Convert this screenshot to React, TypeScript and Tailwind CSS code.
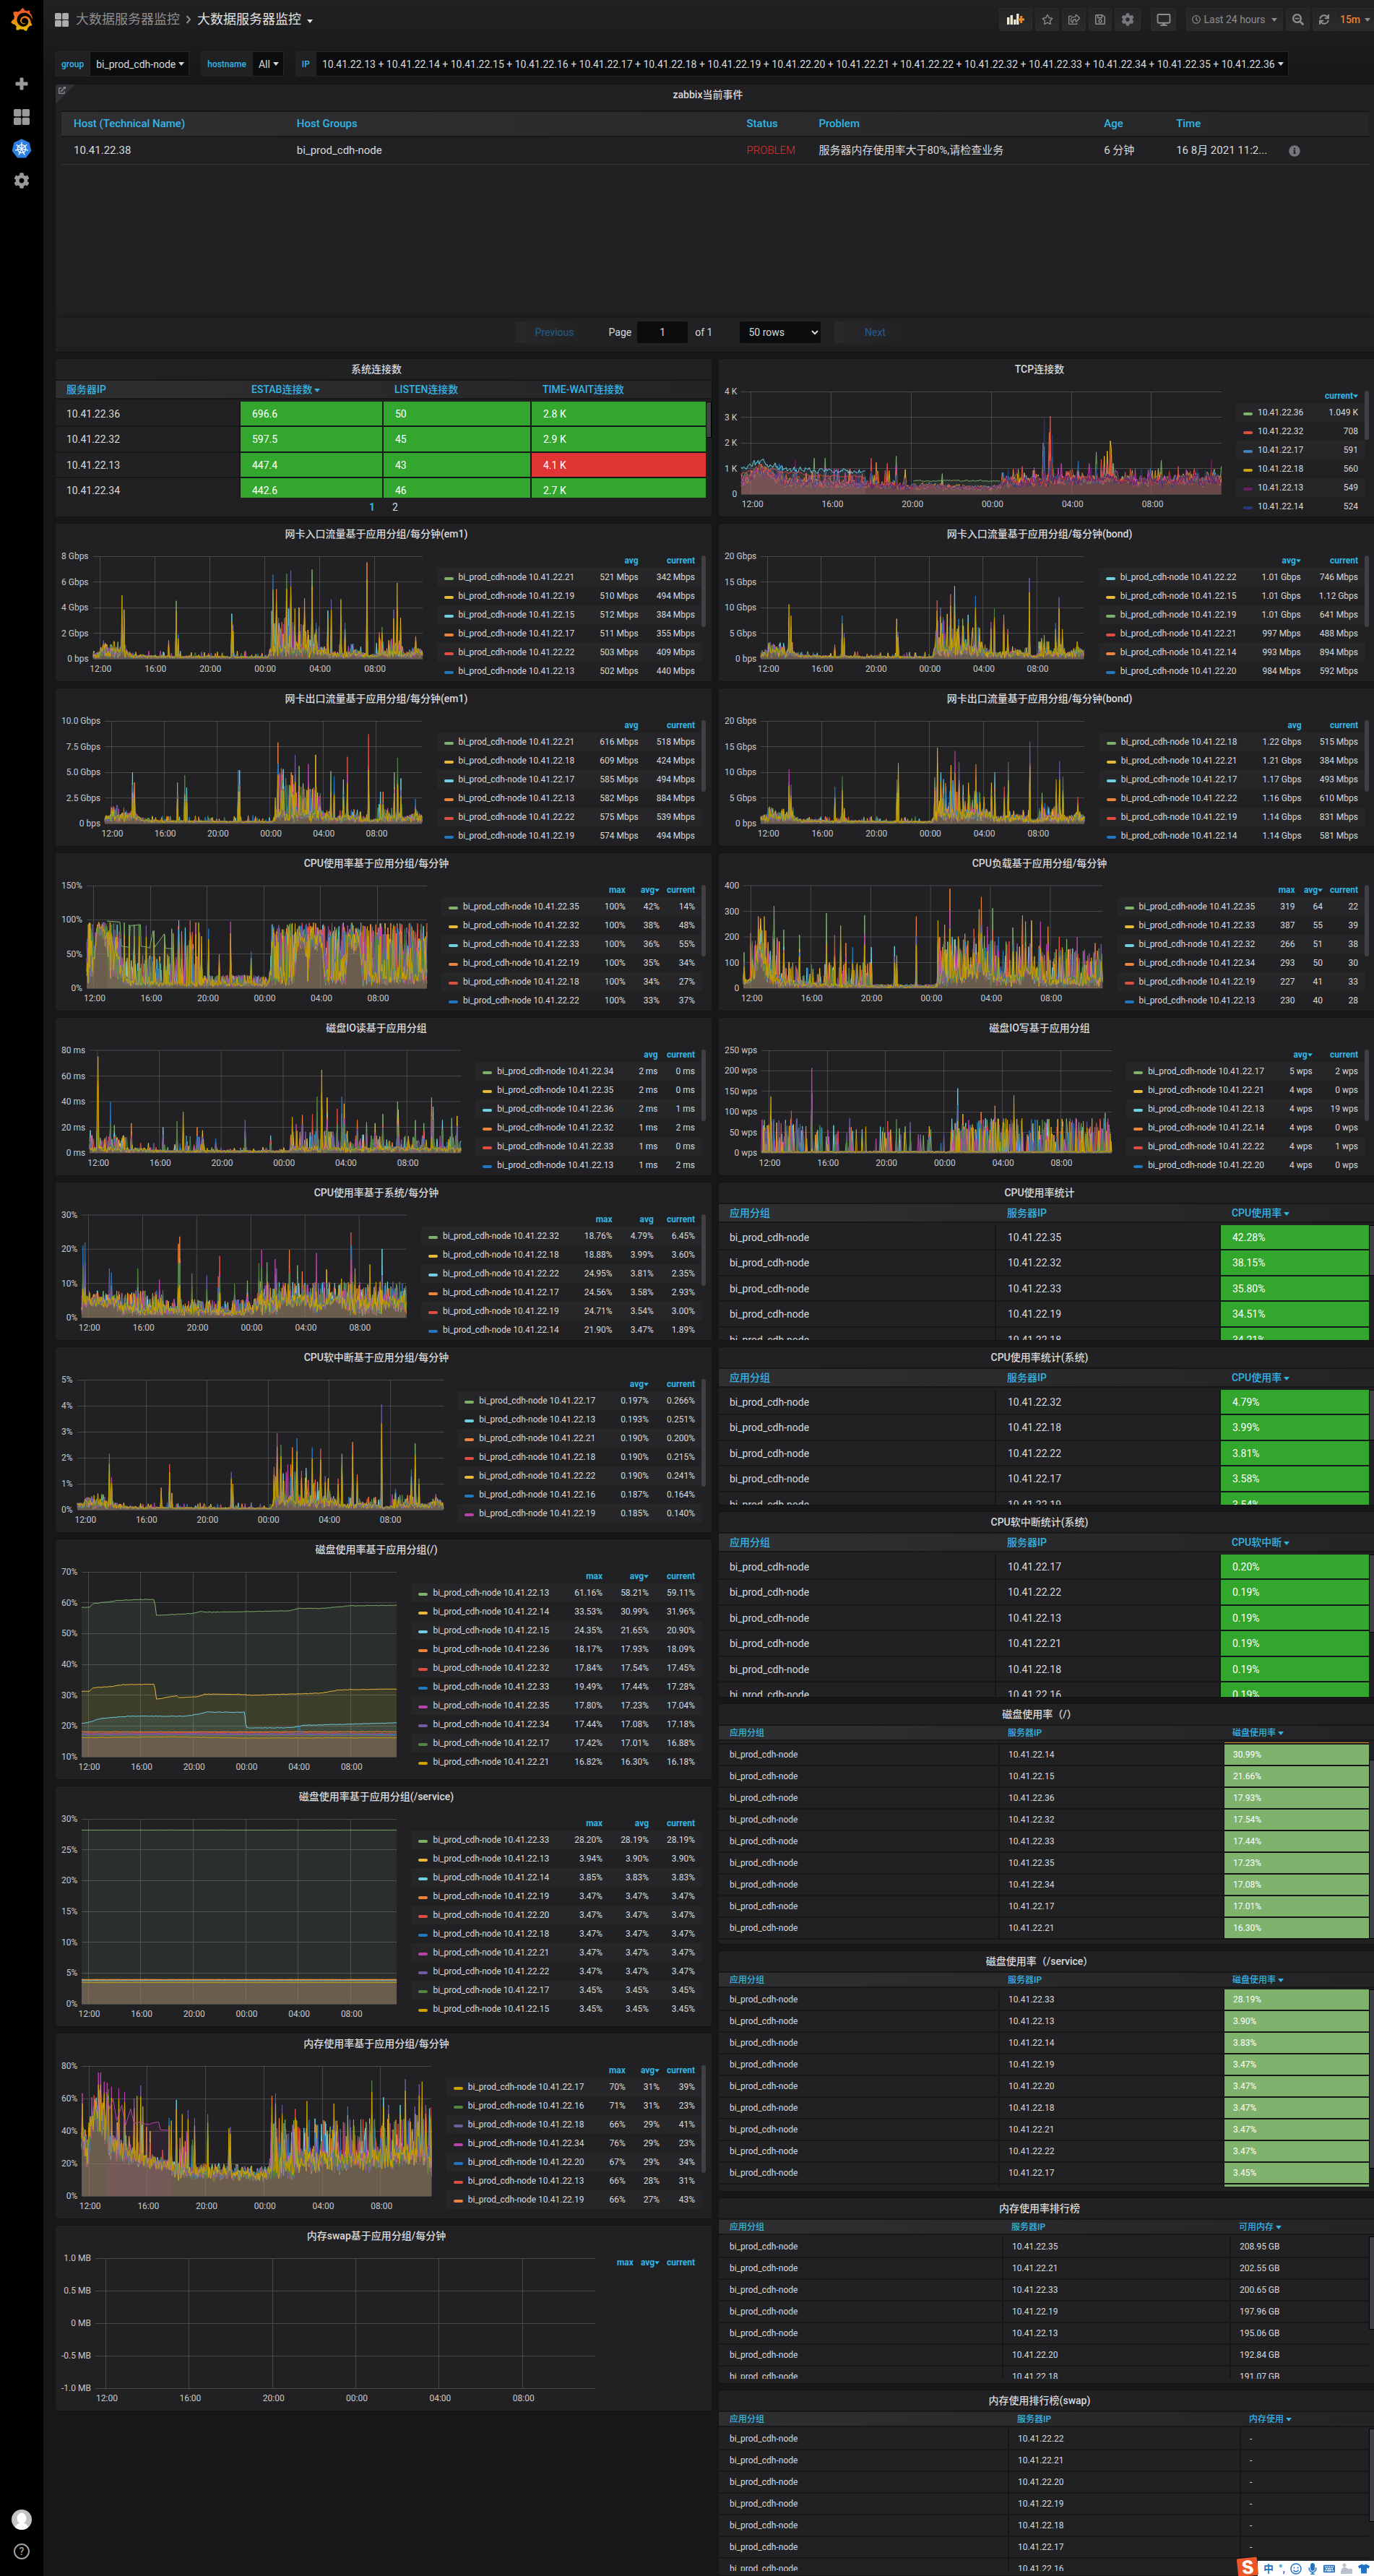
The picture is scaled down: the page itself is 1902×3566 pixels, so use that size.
import React from "react";
import {
  FaRegStar, FaCog, FaRegClock, FaSearchMinus, FaSync, FaRegSave, FaRegShareSquare,
  FaInfoCircle, FaExternalLinkAlt, FaKeyboard, FaMicrophone, FaTshirt, FaRegSmile,
} from "react-icons/fa";
import { SiGrafana } from "react-icons/si";

/* ---------- palette ---------- */
const GREEN = "#7eb26d", YELLOW = "#eab839", CYAN = "#6ed0e0", ORANGE = "#ef843c", RED = "#e24d42";
const BLUE = "#1f78c1", MAGENTA = "#ba43a9", PURPLE = "#705da0", FOREST = "#508642", GOLD = "#cca300";
const PALETTE = [GREEN, YELLOW, CYAN, ORANGE, RED, BLUE, MAGENTA, PURPLE, FOREST, GOLD];
const WINE = "#6d1f62", NAVY = "#1f3f7c", SKY = "#447ebc", RUST = "#bf4a1b";

/* ---------- series generator ---------- */
type Pt = [number, number];
type Spike = [number, number, string?];
type Burst = [number, number, number, number]; // from, to, max height, probability
type Shape = {
  seed: number;
  lo: Pt[];
  hi: Pt[];
  spikes?: Spike[];
  bursts?: Burst[];
  smooth?: number;
  follow?: number;
  colors?: string[];
};

function rng(seed: number) {
  let s = seed * 7919 + 17;
  return () => {
    s = (s + 0x6d2b79f5) | 0;
    let t = Math.imul(s ^ (s >>> 15), 1 | s);
    t = (t + Math.imul(t ^ (t >>> 7), 61 | t)) ^ t;
    return ((t ^ (t >>> 14)) >>> 0) / 4294967296;
  };
}

function level(pts: Pt[], t: number) {
  if (t <= pts[0][0]) return pts[0][1];
  for (let i = 1; i < pts.length; i++) {
    if (t <= pts[i][0]) {
      const [x0, y0] = pts[i - 1];
      const [x1, y1] = pts[i];
      return y0 + ((y1 - y0) * (t - x0)) / (x1 - x0 || 1);
    }
  }
  return pts[pts.length - 1][1];
}

const N = 480;

function build(shape: Shape) {
  const r = rng(shape.seed);
  const colors = shape.colors ?? PALETTE;
  const common = Array.from({ length: N + 1 }, () => r());
  const rows = colors.map(() => new Array<number>(N + 1).fill(0));
  const sm = shape.smooth ?? 0;
  rows.forEach((row) => {
    let prev = 0.5;
    for (let i = 0; i <= N; i++) {
      const t = i / N;
      prev = prev * sm + (r() * 0.6 + common[i] * 0.4) * (1 - sm);
      const lo = level(shape.lo, t);
      row[i] = lo + (level(shape.hi, t) - lo) * prev;
    }
  });
  const raise = (i: number, h: number, owner: number) => {
    rows.forEach((row, k) => {
      const last = k === colors.length - 1;
      const f = k === owner ? 1 : last ? (shape.follow ?? 0.82) : 0.2 + r() * 0.55;
      row[i] = Math.max(row[i], h * f);
    });
  };
  (shape.bursts ?? []).forEach(([a, b, max, p]) => {
    for (let i = Math.ceil(a * N); i <= b * N; i++) {
      rows.forEach((row) => {
        if (r() < p) row[i] = Math.max(row[i], max * (0.25 + 0.75 * r()));
      });
    }
  });
  (shape.spikes ?? []).forEach(([x, h, c]) => {
    const owner = c ? colors.indexOf(c) : Math.floor(r() * colors.length);
    raise(Math.round(x * N), h, owner < 0 ? 0 : owner);
  });
  return rows.map((row, k) => ({
    color: colors[k],
    pts: row.map((v, i) => [(i / N) * 1000, 1000 - v * 1000] as Pt),
  }));
}

type Line = { color: string; pts: Pt[] };
const wave = (color: string, pts: Pt[], jitter: number, seed: number): Line => {
  const r = rng(seed);
  return {
    color,
    pts: Array.from({ length: 241 }, (_, i) => [
      (i / 240) * 1000,
      1000 - (level(pts, i / 240) + (r() - 0.5) * jitter) * 1000,
    ] as Pt),
  };
};

/* ---------- chart ---------- */
type Chart = {
  title: string;
  y: string[];
  lines: Line[];
  heads: string[];
  rows: [string, string, ...string[]][];
  size: string;
  bar?: string;
  prefix?: string;
};

function Plot({ lines, steps }: { lines: Line[]; steps: number }) {
  return (
    <svg viewBox="0 0 1000 1000" preserveAspectRatio="none" className="block min-h-0 w-full flex-1 overflow-visible">
      <g stroke="#49494c" strokeWidth="1" shapeRendering="crispEdges">
        {Array.from({ length: steps + 1 }, (_, i) => (
          <line key={i} x1="0" x2="1000" y1={(i * 1000) / steps} y2={(i * 1000) / steps} vectorEffect="non-scaling-stroke" />
        ))}
        {Array.from({ length: 6 }, (_, i) => (
          <line key={i} y1="0" y2="1000" x1={21 + i * 166.7} x2={21 + i * 166.7} vectorEffect="non-scaling-stroke" />
        ))}
      </g>
      {lines.map((l, i) => {
        const d = l.pts.map(([x, y]) => `${x.toFixed(1)},${y.toFixed(1)}`).join(" ");
        return (
          <g key={i}>
            <polygon points={`${l.pts[0][0]},1000 ${d} ${l.pts[l.pts.length - 1][0]},1000`} fill={l.color} fillOpacity="0.1" />
            <polyline points={d} fill="none" stroke={l.color} strokeWidth="1" vectorEffect="non-scaling-stroke" />
          </g>
        );
      })}
    </svg>
  );
}

function Title({ children }: { children: React.ReactNode }) {
  return (
    <h2 className="h-7 shrink-0 truncate pr-5 text-center text-sm leading-7 font-medium text-[#d8d9da]">{children}</h2>
  );
}

const panelClass = "relative flex flex-col overflow-hidden rounded-[3px] border border-[#141414] bg-[#212124]";

function Caret({ className = "" }: { className?: string }) {
  return (
    <svg viewBox="0 0 8 5" className={"inline-block h-[5px] w-2 shrink-0 align-middle " + className} fill="currentColor">
      <path d="M0 0h8L4 5Z" />
    </svg>
  );
}

function ChartPanel({ c }: { c: Chart }) {
  return (
    <section className={panelClass + " " + c.size}>
      <Title>{c.title}</Title>
      <div className="flex min-h-0 flex-1 pl-2 text-xs">
        <div className="mt-[17px] mb-[31px] flex flex-col justify-between pr-1.5 text-right text-[#c8c9ca]">
          {c.y.map((v) => (
            <div key={v} className="flex h-0 items-center justify-end whitespace-nowrap">{v}</div>
          ))}
        </div>
        <div className="flex min-w-0 flex-1 flex-col pt-[17px]">
          <Plot lines={c.lines} steps={c.y.length - 1} />
          <div className="-ml-[6%] flex h-[31px] w-full shrink-0 pt-1.5 leading-4 text-[#c8c9ca]">
            {["12:00", "16:00", "20:00", "00:00", "04:00", "08:00"].map((t) => (
              <span key={t} className="w-1/6 text-center">{t}</span>
            ))}
          </div>
        </div>
        <div className="mr-[13px] ml-5 shrink-0 pt-[13px]">
          <table className="border-separate border-spacing-0">
            <thead>
              <tr className="h-5 text-[#33b5e5]">
                <th className="pl-2.5" />
                {c.heads.map((h) => (
                  <th key={h} className="pr-2.5 text-right font-bold whitespace-nowrap">
                    {h.replace("▾", "")}
                    {h.endsWith("▾") && <Caret className="h-1 w-[7px]" />}
                  </th>
                ))}
              </tr>
            </thead>
            <tbody>
              {c.rows.map(([color, ip, ...vals]) => (
                <tr key={ip} className="h-[26px] text-[#d8d9da] odd:bg-[#262628]">
                  <td className="pr-5 pl-2.5 whitespace-nowrap">
                    <span className="flex items-center gap-[7px]">
                      <i className="mt-1 h-1 w-[13px] rounded-xs" style={{ background: color }} />
                      {(c.prefix ?? "bi_prod_cdh-node ") + ip}
                    </span>
                  </td>
                  {vals.map((v, i) => (
                    <td key={i} className="pr-2.5 pl-[15px] text-right whitespace-nowrap">{v}</td>
                  ))}
                </tr>
              ))}
            </tbody>
          </table>
        </div>
      </div>
      {c.bar && <div className={"absolute top-11 right-2 w-1.5 rounded-full bg-[#404045] " + c.bar} />}
    </section>
  );
}

/* ---------- table panel ---------- */
type Cell = string | [string, string];
type Grid = {
  title: string;
  size: string;
  cols: number[];
  heads: string[];
  rows: Cell[][];
  small?: boolean;
  bodyClass: string;
  bar: string;
  pager?: boolean;
  cut?: boolean;
};

function TablePanel({ g }: { g: Grid }) {
  const total = g.cols.reduce((a, b) => a + b, 0);
  return (
    <section className={panelClass + " " + g.size}>
      <Title>{g.title}</Title>
      <div className="relative border-t-2 border-[#161719]">
        <div className={"absolute inset-x-0 top-0 border-b-2 border-[#161719] bg-linear-to-r from-[#2f2f32] to-[#242426] " + (g.small ? "h-[21px]" : "h-[26px]")} />
        <div className={"relative overflow-hidden pr-2 " + g.bodyClass}>
          <table className={"w-full table-fixed border-separate border-spacing-0 text-left " + (g.small ? "text-xs" : "text-sm")}>
            <colgroup>
              {g.cols.map((c, i) => (
                <col key={i} style={{ width: `${(c / total) * 100}%` }} />
              ))}
            </colgroup>
            <thead>
              <tr className={g.small ? "h-[23px]" : "h-[29px]"}>
                {g.heads.map((h, i) => (
                  <th key={h} className={"align-top font-medium whitespace-nowrap text-[#33b5e5] " + (g.small ? "leading-5 " : "leading-6 ") + (i ? (g.small ? "pl-[11px]" : "pl-[15px]") : "pl-[15px]")}>
                    {h.replace("▾", "")}
                    {h.endsWith("▾") && <Caret className="ml-[3px]" />}
                  </th>
                ))}
              </tr>
            </thead>
            <tbody>
              {g.cut && (
                <tr className="h-[3px]">
                  {g.cols.map((_, i) => (
                    <td key={i} className={"border-r-2 border-b-2 border-[#161719] p-0 leading-none last:border-r-0 " + (i === 2 ? "bg-[#e0892f]" : "")} />
                  ))}
                </tr>
              )}
              {g.rows.map((row, ri) => (
                <tr key={ri} className={g.small ? "h-[30px]" : "odd:h-[35px] even:h-[36px]"}>
                  {row.map((cell, i) => {
                    const [text, bg] = typeof cell === "string" ? [cell, ""] : cell;
                    return (
                      <td
                        key={i}
                        className={"border-r-2 border-b-2 border-[#161719] py-0 leading-5 whitespace-nowrap last:border-r-0 " + (i ? (g.small ? "pl-3 " : "pl-4 ") : "pl-[15px] ") + (bg ? bg + " text-white" : "text-[#d8d9da]")}
                      >
                        {text}
                      </td>
                    );
                  })}
                </tr>
              ))}
            </tbody>
          </table>
        </div>
        <div className={"absolute right-0 w-2 border border-black bg-[#404045] " + g.bar} />
      </div>
      {g.pager && (
        <nav className="mt-[3px] flex justify-center gap-6 text-sm leading-5">
          <a href="#1" className="font-bold text-[#33b5e5]">1</a>
          <a href="#2" className="text-[#d8d9da]">2</a>
        </nav>
      )}
    </section>
  );
}

/* ---------- data ---------- */
const S = "h-[220px]", M = "h-[258px]", L = "h-[334px]";
const netLo: Pt[] = [[0, 0.005], [1, 0.005]];
const netHi: Pt[] = [[0, 0.08], [0.02, 0.1], [0.025, 0.18], [0.05, 0.13], [0.09, 0.12], [0.12, 0.05], [0.2, 0.035], [0.53, 0.025], [0.54, 0.18], [0.7, 0.15], [0.72, 0.07], [0.8, 0.1], [0.84, 0.04], [0.9, 0.1], [0.95, 0.07], [0.98, 0.14], [1, 0.09]];
const netBursts = (k: number): Burst[] => [[0.54, 0.6, 0.5 * k, 0.1], [0.6, 0.69, 0.36 * k, 0.07], [0.74, 0.83, 0.15 * k, 0.05], [0.86, 0.94, 0.2 * k, 0.08], [0.02, 0.1, 0.18 * k, 0.08], [0.1, 0.53, 0.08 * k, 0.03]];
const mix = (heights: number[], tips: string[]): Spike[] => {
  const xs = [0.087, 0.093, 0.23, 0.253, 0.258, 0.42, 0.425, 0.538, 0.546, 0.556, 0.563, 0.588, 0.599, 0.613, 0.625, 0.642, 0.665, 0.677, 0.713, 0.722, 0.753, 0.765, 0.831, 0.868, 0.877, 0.912, 0.923, 0.933, 0.979];
  return xs.map((x, i) => [x, heights[i], tips[i % tips.length]] as Spike);
};

const conn = (ip: string, a: string, b: string, c: string, red = false): Cell[] => [
  ip, [a, "bg-[#32a62d]"], [b, "bg-[#32a62d]"], [c, red ? "bg-[#e13535]" : "bg-[#32a62d]"],
];
const node = (ip: string, v: string, bg = ""): Cell[] => ["bi_prod_cdh-node", "10.41.22." + ip, bg ? [v, bg] : v];
const G1 = "bg-[#32a62d]", G2 = "bg-[#7eb26d]";

const left: (Chart | Grid)[] = [
  {
    title: "系统连接数", size: S, cols: [256, 198, 205, 241], bodyClass: "h-[162px]", bar: "top-[29px] h-[50px]", pager: true,
    heads: ["服务器IP", "ESTAB连接数▾", "LISTEN连接数", "TIME-WAIT连接数"],
    rows: [conn("10.41.22.36", "696.6", "50", "2.8 K"), conn("10.41.22.32", "597.5", "45", "2.9 K"), conn("10.41.22.13", "447.4", "43", "4.1 K", true), conn("10.41.22.34", "442.6", "46", "2.7 K")],
  },
  {
    title: "网卡入口流量基于应用分组/每分钟(em1)", size: S, bar: "h-[99px]", y: ["8 Gbps", "6 Gbps", "4 Gbps", "2 Gbps", "0 bps"],
    heads: ["avg", "current"],
    rows: [[GREEN, "10.41.22.21", "521 Mbps", "342 Mbps"], [YELLOW, "10.41.22.19", "510 Mbps", "494 Mbps"], [CYAN, "10.41.22.15", "512 Mbps", "384 Mbps"], [ORANGE, "10.41.22.17", "511 Mbps", "355 Mbps"], [RED, "10.41.22.22", "503 Mbps", "409 Mbps"], [BLUE, "10.41.22.13", "502 Mbps", "440 Mbps"]],
    lines: build({ seed: 1, lo: netLo, hi: netHi, bursts: netBursts(1), spikes: mix([0.62, 0.48, 0.18, 0.565, 0.24, 0.44, 0.33, 0.1, 0.82, 0.68, 0.4, 0.83, 0.86, 0.49, 0.5, 0.59, 0.87, 0.35, 0.47, 0.58, 0.58, 0.35, 0.94, 0.26, 0.31, 0.48, 0.74, 0.4, 0.22], [GOLD, YELLOW, ORANGE, GREEN, BLUE, CYAN, PURPLE, GOLD, BLUE, ORANGE, RED, FOREST, PURPLE]) }),
  },
  {
    title: "网卡出口流量基于应用分组/每分钟(em1)", size: S, bar: "h-[99px]", y: ["10.0 Gbps", "7.5 Gbps", "5.0 Gbps", "2.5 Gbps", "0 bps"],
    heads: ["avg", "current"],
    rows: [[GREEN, "10.41.22.21", "616 Mbps", "518 Mbps"], [YELLOW, "10.41.22.18", "609 Mbps", "424 Mbps"], [CYAN, "10.41.22.17", "585 Mbps", "494 Mbps"], [ORANGE, "10.41.22.13", "582 Mbps", "884 Mbps"], [RED, "10.41.22.22", "575 Mbps", "539 Mbps"], [BLUE, "10.41.22.19", "574 Mbps", "494 Mbps"]],
    lines: build({ seed: 2, lo: netLo, hi: netHi, bursts: netBursts(1), follow: 0.6, spikes: mix([0.5, 0.4, 0.4, 0.47, 0.35, 0.52, 0.52, 0.25, 0.79, 0.54, 0.53, 0.5, 0.67, 0.56, 0.39, 0.58, 0.67, 0.27, 0.51, 0.46, 0.43, 0.65, 0.87, 0.31, 0.31, 0.5, 0.64, 0.44, 0.24], [CYAN, ORANGE, GREEN, FOREST, CYAN, BLUE, CYAN, GOLD, ORANGE, RED, CYAN, ORANGE, PURPLE, GREEN, YELLOW, MAGENTA, YELLOW, RED, GREEN, BLUE, CYAN, RED, RED]) }),
  },
  {
    title: "CPU使用率基于应用分组/每分钟", size: S, bar: "h-[99px]", y: ["150%", "100%", "50%", "0%"],
    heads: ["max", "avg▾", "current"],
    rows: [[GREEN, "10.41.22.35", "100%", "42%", "14%"], [YELLOW, "10.41.22.32", "100%", "38%", "48%"], [CYAN, "10.41.22.33", "100%", "36%", "55%"], [ORANGE, "10.41.22.19", "100%", "35%", "34%"], [RED, "10.41.22.18", "100%", "34%", "27%"], [BLUE, "10.41.22.22", "100%", "33%", "37%"]],
    lines: build({
      seed: 3,
      lo: [[0, 0.02], [0.02, 0.05], [0.03, 0.5], [0.05, 0.45], [0.07, 0.05], [0.1, 0.01], [0.61, 0.01], [0.62, 0.32], [0.64, 0.35], [0.65, 0.02], [0.66, 0.35], [0.69, 0.35], [0.7, 0.01], [0.76, 0.01], [0.77, 0.35], [0.8, 0.3], [0.81, 0.01], [1, 0.01]],
      hi: [[0, 0.3], [0.02, 0.35], [0.03, 0.66], [0.07, 0.66], [0.1, 0.3], [0.12, 0.12], [0.2, 0.08], [0.3, 0.07], [0.53, 0.05], [0.54, 0.2], [0.61, 0.2], [0.62, 0.6], [0.69, 0.6], [0.7, 0.2], [0.76, 0.2], [0.77, 0.6], [0.8, 0.6], [0.82, 0.2], [1, 0.25]],
      bursts: [[0, 0.1, 0.65, 0.35], [0.1, 0.34, 0.33, 0.12], [0.25, 0.34, 0.62, 0.07], [0.34, 0.53, 0.13, 0.35], [0.54, 1, 0.64, 0.36]],
      spikes: [[0.11, 0.64, GREEN], [0.125, 0.62, GREEN], [0.14, 0.62, GREEN], [0.155, 0.62, GREEN], [0.175, 0.61, PURPLE], [0.197, 0.56, GREEN], [0.23, 0.52, GREEN], [0.27, 0.66, CYAN], [0.305, 0.66, RED], [0.32, 0.64, ORANGE], [0.33, 0.64, GOLD], [0.358, 0.58, BLUE], [0.422, 0.65, MAGENTA], [0.483, 0.36, BLUE], [0.39, 0.33, ORANGE]],
    }).concat([{ color: GREEN, pts: [[60, 345], [98, 355], [102, 590], [125, 600], [128, 390], [158, 380], [160, 590], [180, 600], [185, 610], [195, 440], [200, 600], [228, 470], [232, 610], [252, 615]] }]),
  },
  {
    title: "磁盘IO读基于应用分组", size: S, bar: "h-[99px]", y: ["80 ms", "60 ms", "40 ms", "20 ms", "0 ms"],
    heads: ["avg", "current"],
    rows: [[GREEN, "10.41.22.34", "2 ms", "0 ms"], [YELLOW, "10.41.22.35", "2 ms", "0 ms"], [CYAN, "10.41.22.36", "2 ms", "1 ms"], [ORANGE, "10.41.22.32", "1 ms", "2 ms"], [RED, "10.41.22.33", "1 ms", "0 ms"], [BLUE, "10.41.22.13", "1 ms", "2 ms"]],
    lines: build({
      seed: 4, follow: 0.12, lo: [[0, 0], [1, 0]],
      hi: [[0, 0.07], [0.13, 0.06], [0.2, 0.03], [0.53, 0.03], [0.55, 0.07], [1, 0.07]],
      bursts: [[0, 0.1, 0.18, 0.08], [0.1, 0.25, 0.1, 0.04], [0.25, 0.31, 0.18, 0.1], [0.31, 0.53, 0.06, 0.04], [0.54, 0.7, 0.22, 0.09], [0.7, 1, 0.18, 0.07]],
      spikes: [[0.021, 0.6, GOLD], [0.023, 0.94, GOLD], [0.003, 0.22, CYAN], [0.056, 0.5, BLUE], [0.067, 0.27, GREEN], [0.113, 0.29, ORANGE], [0.197, 0.25, CYAN], [0.235, 0.31, FOREST], [0.252, 0.4, GOLD], [0.29, 0.25, ORANGE], [0.305, 0.22, YELLOW], [0.34, 0.14, BLUE], [0.419, 0.32, PURPLE], [0.487, 0.17, CYAN], [0.545, 0.35, GOLD], [0.556, 0.28, MAGENTA], [0.573, 0.37, ORANGE], [0.6, 0.38, RED], [0.613, 0.55, FOREST], [0.625, 0.81, GOLD], [0.64, 0.54, YELLOW], [0.666, 0.43, RED], [0.68, 0.55, BLUE], [0.686, 0.48, YELLOW], [0.72, 0.32, ORANGE], [0.745, 0.3, GREEN], [0.768, 0.29, YELLOW], [0.789, 0.38, GREEN], [0.829, 0.5, GREEN], [0.831, 0.42, YELLOW], [0.877, 0.32, GREEN], [0.9, 0.29, GREEN], [0.92, 0.54, ORANGE], [0.925, 0.45, CYAN], [0.95, 0.32, CYAN], [0.975, 0.34, GREEN], [0.99, 0.36, YELLOW]],
    }),
  },
  {
    title: "CPU使用率基于系统/每分钟", size: S, bar: "h-[99px]", y: ["30%", "20%", "10%", "0%"],
    heads: ["max", "avg", "current"],
    rows: [[GREEN, "10.41.22.32", "18.76%", "4.79%", "6.45%"], [YELLOW, "10.41.22.18", "18.88%", "3.99%", "3.60%"], [CYAN, "10.41.22.22", "24.95%", "3.81%", "2.35%"], [ORANGE, "10.41.22.17", "24.56%", "3.58%", "2.93%"], [RED, "10.41.22.19", "24.71%", "3.54%", "3.00%"], [BLUE, "10.41.22.14", "21.90%", "3.47%", "1.89%"]],
    lines: build({
      seed: 5, follow: 0.4,
      lo: [[0, 0.02], [0.02, 0.1], [0.1, 0.08], [0.12, 0.01], [0.53, 0.01], [0.6, 0.01], [0.62, 0.1], [0.7, 0.08], [0.72, 0.01], [0.78, 0.15], [0.82, 0.01], [0.92, 0.01], [0.95, 0.1], [0.98, 0.02], [1, 0.02]],
      hi: [[0, 0.22], [0.1, 0.22], [0.15, 0.14], [0.3, 0.12], [0.5, 0.08], [0.54, 0.22], [0.7, 0.26], [0.74, 0.15], [0.8, 0.28], [0.9, 0.2], [1, 0.22]],
      bursts: [[0, 0.25, 0.27, 0.2], [0.25, 0.52, 0.18, 0.16], [0.54, 1, 0.35, 0.2]],
      spikes: [[0.005, 0.7, BLUE], [0.01, 0.73, BLUE], [0.086, 0.48, PURPLE], [0.092, 0.44, BLUE], [0.172, 0.48, FOREST], [0.24, 0.37, MAGENTA], [0.298, 0.72, ORANGE], [0.302, 0.79, ORANGE], [0.34, 0.43, FOREST], [0.385, 0.41, PURPLE], [0.42, 0.4, RED], [0.424, 0.6, RED], [0.47, 0.33, FOREST], [0.51, 0.36, GREEN], [0.545, 0.53, FOREST], [0.555, 0.66, MAGENTA], [0.57, 0.54, GREEN], [0.595, 0.57, MAGENTA], [0.6, 0.48, PURPLE], [0.64, 0.66, ORANGE], [0.665, 0.51, GREEN], [0.68, 0.45, ORANGE], [0.722, 0.63, MAGENTA], [0.755, 0.47, YELLOW], [0.8, 0.38, GOLD], [0.83, 0.83, RED], [0.832, 0.7, BLUE], [0.842, 0.48, GOLD], [0.888, 0.52, GOLD], [0.925, 0.67, CYAN], [0.97, 0.32, PURPLE], [0.998, 0.31, FOREST]],
    }),
  },
  {
    title: "CPU软中断基于应用分组/每分钟", size: M, bar: "h-[149px]", y: ["5%", "4%", "3%", "2%", "1%", "0%"],
    heads: ["avg▾", "current"],
    rows: [[GREEN, "10.41.22.17", "0.197%", "0.266%"], [CYAN, "10.41.22.13", "0.193%", "0.251%"], [ORANGE, "10.41.22.21", "0.190%", "0.200%"], [RED, "10.41.22.18", "0.190%", "0.215%"], [YELLOW, "10.41.22.22", "0.190%", "0.241%"], [BLUE, "10.41.22.16", "0.187%", "0.164%"], [MAGENTA, "10.41.22.19", "0.185%", "0.140%"]],
    lines: build({ seed: 6, lo: netLo, hi: netHi.map(([x, y]) => [x, y * 0.7] as Pt), bursts: netBursts(0.7), spikes: mix([0.43, 0.25, 0.17, 0.35, 0.13, 0.29, 0.2, 0.33, 0.59, 0.5, 0.28, 0.48, 0.55, 0.3, 0.32, 0.48, 0.47, 0.26, 0.24, 0.43, 0.52, 0.27, 0.81, 0.16, 0.1, 0.31, 0.51, 0.24, 0.12], [FOREST, MAGENTA, ORANGE, RED, YELLOW, PURPLE, GOLD, RED, MAGENTA, FOREST, CYAN, ORANGE, BLUE, RED, CYAN, BLUE, RED, PURPLE, RED, GREEN, ORANGE, ORANGE, PURPLE, BLUE, GREEN, BLUE, GREEN]) }),
  },
  {
    title: "磁盘使用率基于应用分组(/)", size: L, y: ["70%", "60%", "50%", "40%", "30%", "20%", "10%"],
    heads: ["max", "avg▾", "current"],
    rows: [[GREEN, "10.41.22.13", "61.16%", "58.21%", "59.11%"], [YELLOW, "10.41.22.14", "33.53%", "30.99%", "31.96%"], [CYAN, "10.41.22.15", "24.35%", "21.65%", "20.90%"], [ORANGE, "10.41.22.36", "18.17%", "17.93%", "18.09%"], [RED, "10.41.22.32", "17.84%", "17.54%", "17.45%"], [BLUE, "10.41.22.33", "19.49%", "17.44%", "17.28%"], [MAGENTA, "10.41.22.35", "17.80%", "17.23%", "17.04%"], [PURPLE, "10.41.22.34", "17.44%", "17.08%", "17.18%"], [FOREST, "10.41.22.17", "17.42%", "17.01%", "16.88%"], [GOLD, "10.41.22.21", "16.82%", "16.30%", "16.18%"]],
    lines: [
      wave(GREEN, [[0, 0.808], [0.025, 0.81], [0.035, 0.828], [0.12, 0.846], [0.19, 0.851], [0.232, 0.85], [0.236, 0.765], [0.35, 0.775], [0.38, 0.786], [0.41, 0.782], [0.66, 0.79], [0.69, 0.803], [0.76, 0.802], [0.85, 0.817], [1, 0.819]], 0.003, 1),
      wave(YELLOW, [[0, 0.354], [0.025, 0.355], [0.035, 0.372], [0.1, 0.382], [0.13, 0.39], [0.232, 0.392], [0.236, 0.31], [0.28, 0.325], [0.3, 0.33], [0.31, 0.32], [0.37, 0.326], [0.39, 0.339], [0.5, 0.338], [0.54, 0.333], [0.68, 0.34], [0.76, 0.345], [0.82, 0.362], [1, 0.367]], 0.003, 2),
      wave(CYAN, [[0, 0.18], [0.03, 0.19], [0.06, 0.207], [0.15, 0.22], [0.33, 0.22], [0.36, 0.228], [0.4, 0.242], [0.517, 0.241], [0.522, 0.156], [0.67, 0.158], [0.7, 0.17], [0.83, 0.176], [1, 0.184]], 0.003, 3),
      wave(ORANGE, [[0, 0.135], [1, 0.136]], 0.003, 4), wave(RED, [[0, 0.128], [0.5, 0.131], [1, 0.125]], 0.004, 5), wave(BLUE, [[0, 0.124], [0.688, 0.124], [0.692, 0.166], [0.697, 0.124], [1, 0.123]], 0.004, 6),
      wave(MAGENTA, [[0, 0.122], [0.4, 0.125], [1, 0.118]], 0.004, 7), wave(PURPLE, [[0, 0.118], [1, 0.12]], 0.004, 8), wave(FOREST, [[0, 0.116], [1, 0.115]], 0.004, 9), wave(GOLD, [[0, 0.104], [0.28, 0.108], [0.5, 0.102], [1, 0.103]], 0.003, 10),
    ],
  },
  {
    title: "磁盘使用率基于应用分组(/service)", size: L, y: ["30%", "25%", "20%", "15%", "10%", "5%", "0%"],
    heads: ["max", "avg", "current"],
    rows: [[GREEN, "10.41.22.33", "28.20%", "28.19%", "28.19%"], [YELLOW, "10.41.22.13", "3.94%", "3.90%", "3.90%"], [CYAN, "10.41.22.14", "3.85%", "3.83%", "3.83%"], [ORANGE, "10.41.22.19", "3.47%", "3.47%", "3.47%"], [RED, "10.41.22.20", "3.47%", "3.47%", "3.47%"], [BLUE, "10.41.22.18", "3.47%", "3.47%", "3.47%"], [MAGENTA, "10.41.22.21", "3.47%", "3.47%", "3.47%"], [PURPLE, "10.41.22.22", "3.47%", "3.47%", "3.47%"], [FOREST, "10.41.22.17", "3.45%", "3.45%", "3.45%"], [GOLD, "10.41.22.15", "3.45%", "3.45%", "3.45%"]],
    lines: [[GREEN, 0.94], [YELLOW, 0.131], [CYAN, 0.126], [ORANGE, 0.132], [RED, 0.117], [BLUE, 0.117], [MAGENTA, 0.117], [PURPLE, 0.117], [FOREST, 0.117], [GOLD, 0.116]].map(([c, v], i) => wave(c as string, [[0, v as number], [1, v as number]], 0.001, i)),
  },
  {
    title: "内存使用率基于应用分组/每分钟", size: M, bar: "h-[149px]", y: ["80%", "60%", "40%", "20%", "0%"],
    heads: ["max", "avg▾", "current"],
    rows: [[GOLD, "10.41.22.17", "70%", "31%", "39%"], [FOREST, "10.41.22.16", "71%", "31%", "23%"], [PURPLE, "10.41.22.18", "66%", "29%", "41%"], [MAGENTA, "10.41.22.34", "76%", "29%", "23%"], [BLUE, "10.41.22.20", "67%", "29%", "34%"], [RED, "10.41.22.13", "66%", "28%", "31%"], [ORANGE, "10.41.22.19", "66%", "27%", "43%"]],
    lines: build({
      seed: 8, smooth: 0.1, follow: 0.9,
      lo: [[0, 0.3], [0.015, 0.12], [0.03, 0.45], [0.06, 0.42], [0.08, 0.25], [0.12, 0.22], [0.17, 0.2], [0.25, 0.18], [0.26, 0.11], [0.53, 0.1], [0.54, 0.1], [0.61, 0.1], [0.63, 0.2], [0.66, 0.12], [0.7, 0.2], [0.73, 0.12], [0.78, 0.22], [0.83, 0.14], [0.9, 0.2], [0.97, 0.2], [1, 0.1]],
      hi: [[0, 0.6], [0.02, 0.6], [0.04, 0.8], [0.06, 0.8], [0.08, 0.5], [0.12, 0.45], [0.18, 0.35], [0.25, 0.3], [0.27, 0.32], [0.33, 0.28], [0.35, 0.27], [0.53, 0.24], [0.54, 0.35], [0.64, 0.4], [0.75, 0.38], [0.9, 0.42], [0.96, 0.5], [1, 0.4]],
      bursts: [[0.02, 0.08, 0.82, 0.2], [0.1, 0.26, 0.6, 0.03], [0.27, 0.34, 0.55, 0.08], [0.54, 0.92, 0.6, 0.18], [0.92, 1, 0.7, 0.2]],
      spikes: [[0.003, 0.79, MAGENTA], [0.048, 0.95, MAGENTA], [0.055, 0.95, MAGENTA], [0.065, 0.88, MAGENTA], [0.072, 0.87, MAGENTA], [0.085, 0.84, MAGENTA], [0.107, 0.83, MAGENTA], [0.122, 0.8, MAGENTA], [0.15, 0.75, MAGENTA], [0.158, 0.77, GOLD], [0.168, 0.85, PURPLE], [0.175, 0.69, GOLD], [0.25, 0.6, BLUE], [0.256, 0.58, GOLD], [0.271, 0.74, CYAN], [0.287, 0.63, GOLD], [0.305, 0.66, PURPLE], [0.322, 0.6, PURPLE], [0.361, 0.63, FOREST], [0.42, 0.52, GOLD], [0.424, 0.53, PURPLE], [0.543, 0.77, ORANGE], [0.554, 0.79, PURPLE], [0.572, 0.7, PURPLE], [0.61, 0.67, RED], [0.643, 0.73, GOLD], [0.72, 0.71, GOLD], [0.76, 0.69, BLUE], [0.83, 0.89, FOREST], [0.863, 0.76, CYAN], [0.877, 0.7, PURPLE], [0.91, 0.7, CYAN], [0.924, 0.9, PURPLE], [0.965, 0.86, PURPLE], [0.972, 0.88, GOLD], [0.984, 0.7, RED], [0.998, 0.68, RED]],
    }).concat([{ color: MAGENTA, pts: [[70, 200], [80, 330], [90, 250], [100, 420], [115, 300], [125, 460], [140, 330], [150, 440], [170, 430], [180, 445], [195, 448], [200, 440], [220, 430], [225, 490], [255, 495]] }]),
  },
  {
    title: "内存swap基于应用分组/每分钟", size: M, y: ["1.0 MB", "0.5 MB", "0 MB", "-0.5 MB", "-1.0 MB"],
    heads: ["max", "avg▾", "current"], rows: [], lines: [],
  },
];

const right: (Chart | Grid)[] = [
  {
    title: "TCP连接数", size: S, bar: "h-[68px]", prefix: "", y: ["4 K", "3 K", "2 K", "1 K", "0"],
    heads: ["current▾"],
    rows: [[GREEN, "10.41.22.36", "1.049 K"], [RED, "10.41.22.32", "708"], [SKY, "10.41.22.17", "591"], [GOLD, "10.41.22.18", "560"], [WINE, "10.41.22.13", "549"], [NAVY, "10.41.22.14", "524"]],
    lines: build({
      seed: 11, smooth: 0.25, follow: 0.3, colors: [YELLOW, GOLD, ORANGE, BLUE, GREEN, MAGENTA, RUST, RED, NAVY, WINE],
      lo: [[0, 0.03], [0.04, 0.13], [0.06, 0.13], [0.08, 0.04], [0.53, 0.02], [0.6, 0.04], [0.7, 0.06], [0.78, 0.08], [0.82, 0.05], [1, 0.05]],
      hi: [[0, 0.24], [0.04, 0.3], [0.1, 0.22], [0.25, 0.15], [0.33, 0.13], [0.53, 0.1], [0.55, 0.2], [0.7, 0.24], [0.8, 0.2], [1, 0.24]],
      bursts: [[0, 0.1, 0.3, 0.06], [0.1, 0.34, 0.25, 0.05], [0.54, 1, 0.26, 0.07]],
      spikes: [[0.112, 0.33, WINE], [0.153, 0.35, GREEN], [0.175, 0.35, GREEN], [0.271, 0.35, RED], [0.282, 0.31, ORANGE], [0.305, 0.3, RED], [0.323, 0.37, GREEN], [0.342, 0.24, YELLOW], [0.418, 0.2, GREEN], [0.585, 0.27, RED], [0.629, 0.5, YELLOW], [0.632, 0.75, NAVY], [0.642, 0.6, ORANGE], [0.644, 0.76, RED], [0.647, 0.58, NAVY], [0.667, 0.3, MAGENTA], [0.702, 0.32, BLUE], [0.726, 0.3, MAGENTA], [0.74, 0.41, GREEN], [0.75, 0.34, RED], [0.757, 0.37, YELLOW], [0.763, 0.42, YELLOW], [0.768, 0.52, YELLOW], [0.771, 0.45, YELLOW], [0.775, 0.3, GREEN], [0.852, 0.25, BLUE], [0.875, 0.33, GREEN], [0.91, 0.27, RED], [0.98, 0.33, WINE], [0.999, 0.27, GREEN]],
    }).concat([
      { color: CYAN, pts: build({ seed: 12, colors: [CYAN], smooth: 0.3, lo: [[0, 0.2], [0.04, 0.26], [0.08, 0.2], [0.26, 0.17]], hi: [[0, 0.3], [0.04, 0.39], [0.08, 0.3], [0.26, 0.25]] })[0].pts.slice(0, 125) },
      { color: RED, pts: build({ seed: 13, colors: [RED], smooth: 0.5, lo: [[0, 0.13], [0.04, 0.2], [0.26, 0.13]], hi: [[0, 0.24], [0.04, 0.32], [0.15, 0.2], [0.26, 0.2]] })[0].pts.slice(0, 125) },
      { color: GREEN, pts: build({ seed: 14, colors: [GREEN], smooth: 0.5, lo: [[0, 0.11]], hi: [[0, 0.15]] })[0].pts.slice(172, 260) },
    ]),
  },
  {
    title: "网卡入口流量基于应用分组/每分钟(bond)", size: S, bar: "h-[99px]", y: ["20 Gbps", "15 Gbps", "10 Gbps", "5 Gbps", "0 bps"],
    heads: ["avg▾", "current"],
    rows: [[CYAN, "10.41.22.22", "1.01 Gbps", "746 Mbps"], [YELLOW, "10.41.22.15", "1.01 Gbps", "1.12 Gbps"], [GREEN, "10.41.22.19", "1.01 Gbps", "641 Mbps"], [RED, "10.41.22.21", "997 Mbps", "488 Mbps"], [ORANGE, "10.41.22.14", "993 Mbps", "894 Mbps"], [BLUE, "10.41.22.20", "984 Mbps", "592 Mbps"]],
    lines: build({ seed: 15, lo: netLo, hi: netHi, bursts: netBursts(0.9), spikes: mix([0.53, 0.42, 0.14, 0.42, 0.25, 0.39, 0.26, 0.1, 0.57, 0.5, 0.3, 0.63, 0.71, 0.39, 0.39, 0.43, 0.61, 0.3, 0.36, 0.49, 0.43, 0.29, 0.79, 0.2, 0.23, 0.35, 0.6, 0.29, 0.17], [GOLD, GOLD, RED, BLUE, PURPLE, YELLOW, BLUE, GOLD, RED, PURPLE, GREEN, RED, CYAN, BLUE, GREEN, CYAN, BLUE, GOLD, MAGENTA, FOREST, ORANGE, RED, PURPLE, GREEN, GOLD, BLUE, PURPLE]) }),
  },
  {
    title: "网卡出口流量基于应用分组/每分钟(bond)", size: S, bar: "h-[99px]", y: ["20 Gbps", "15 Gbps", "10 Gbps", "5 Gbps", "0 bps"],
    heads: ["avg", "current"],
    rows: [[GREEN, "10.41.22.18", "1.22 Gbps", "515 Mbps"], [YELLOW, "10.41.22.21", "1.21 Gbps", "384 Mbps"], [CYAN, "10.41.22.17", "1.17 Gbps", "493 Mbps"], [ORANGE, "10.41.22.22", "1.16 Gbps", "610 Mbps"], [RED, "10.41.22.19", "1.14 Gbps", "831 Mbps"], [BLUE, "10.41.22.14", "1.14 Gbps", "581 Mbps"]],
    lines: build({ seed: 16, lo: netLo, hi: netHi, bursts: netBursts(0.9), follow: 0.7, spikes: mix([0.53, 0.38, 0.36, 0.46, 0.15, 0.43, 0.59, 0.45, 0.74, 0.5, 0.35, 0.57, 0.71, 0.6, 0.38, 0.4, 0.58, 0.3, 0.4, 0.5, 0.36, 0.6, 0.8, 0.3, 0.2, 0.43, 0.61, 0.46, 0.26], [MAGENTA, PURPLE, BLUE, FOREST, YELLOW, FOREST, GOLD, GREEN, YELLOW, CYAN, RED, YELLOW, MAGENTA, PURPLE, CYAN, YELLOW, ORANGE, FOREST, YELLOW, CYAN, RED, FOREST, PURPLE, GREEN, BLUE, GOLD, PURPLE, FOREST, RED]) }),
  },
  {
    title: "CPU负载基于应用分组/每分钟", size: S, bar: "h-[99px]", y: ["400", "300", "200", "100", "0"],
    heads: ["max", "avg▾", "current"],
    rows: [[GREEN, "10.41.22.35", "319", "64", "22"], [YELLOW, "10.41.22.33", "387", "55", "39"], [CYAN, "10.41.22.32", "266", "51", "38"], [ORANGE, "10.41.22.34", "293", "50", "30"], [RED, "10.41.22.19", "227", "41", "33"], [BLUE, "10.41.22.13", "230", "40", "28"]],
    lines: build({
      seed: 17, follow: 0.6,
      lo: [[0, 0.01], [0.03, 0.05], [0.04, 0.2], [0.07, 0.03], [0.1, 0], [0.53, 0], [0.61, 0.01], [0.63, 0.12], [0.65, 0.01], [0.66, 0.12], [0.69, 0.01], [0.77, 0.01], [0.79, 0.12], [0.81, 0.01], [1, 0]],
      hi: [[0, 0.1], [0.02, 0.1], [0.04, 0.5], [0.06, 0.4], [0.08, 0.2], [0.12, 0.1], [0.25, 0.05], [0.34, 0.04], [0.38, 0.02], [0.53, 0.02], [0.55, 0.18], [0.65, 0.28], [0.7, 0.22], [0.75, 0.12], [0.8, 0.25], [0.85, 0.12], [1, 0.15]],
      bursts: [[0.02, 0.1, 0.58, 0.12], [0.1, 0.36, 0.26, 0.07], [0.36, 0.53, 0.04, 0.3], [0.54, 0.7, 0.52, 0.16], [0.7, 0.85, 0.46, 0.12], [0.85, 1, 0.4, 0.13]],
      spikes: [[0.003, 0.35, GREEN], [0.026, 0.46, FOREST], [0.042, 0.7, ORANGE], [0.048, 0.68, YELLOW], [0.058, 0.7, GOLD], [0.086, 0.8, GREEN], [0.112, 0.57, GREEN], [0.157, 0.52, GREEN], [0.232, 0.73, GREEN], [0.255, 0.52, RED], [0.27, 0.61, GOLD], [0.285, 0.44, ORANGE], [0.304, 0.4, BLUE], [0.337, 0.71, GREEN], [0.357, 0.4, CYAN], [0.42, 0.41, CYAN], [0.428, 0.32, GOLD], [0.482, 0.7, ORANGE], [0.542, 0.66, GOLD], [0.56, 0.62, ORANGE], [0.575, 0.97, ORANGE], [0.576, 0.76, MAGENTA], [0.616, 0.53, ORANGE], [0.642, 0.58, RED], [0.656, 0.77, GOLD], [0.663, 0.89, ORANGE], [0.68, 0.6, MAGENTA], [0.693, 0.78, GREEN], [0.71, 0.5, BLUE], [0.75, 0.59, GREEN], [0.778, 0.71, ORANGE], [0.785, 0.65, GREEN], [0.803, 0.66, YELLOW], [0.827, 0.65, MAGENTA], [0.848, 0.6, ORANGE], [0.88, 0.5, RED], [0.9, 0.48, GREEN], [0.93, 0.5, MAGENTA], [0.95, 0.38, BLUE], [0.98, 0.44, ORANGE], [0.995, 0.43, PURPLE]],
    }),
  },
  {
    title: "磁盘IO写基于应用分组", size: S, bar: "h-[99px]", y: ["250 wps", "200 wps", "150 wps", "100 wps", "50 wps", "0 wps"],
    heads: ["avg▾", "current"],
    rows: [[GREEN, "10.41.22.17", "5 wps", "2 wps"], [YELLOW, "10.41.22.21", "4 wps", "0 wps"], [CYAN, "10.41.22.13", "4 wps", "19 wps"], [ORANGE, "10.41.22.14", "4 wps", "0 wps"], [RED, "10.41.22.22", "4 wps", "1 wps"], [BLUE, "10.41.22.20", "4 wps", "0 wps"]],
    lines: build({
      seed: 18, follow: 0.05, lo: [[0, 0], [1, 0]], hi: [[0, 0.02], [1, 0.02]],
      bursts: [[0, 0.12, 0.34, 0.13], [0.12, 0.3, 0.27, 0.04], [0.3, 0.53, 0.26, 0.02], [0.54, 0.72, 0.34, 0.18], [0.72, 0.84, 0.34, 0.12], [0.84, 1, 0.34, 0.13]],
      spikes: [[0.028, 0.55, GOLD], [0.086, 0.41, RED], [0.143, 0.83, MAGENTA], [0.253, 0.34, PURPLE], [0.36, 0.31, RED], [0.385, 0.33, FOREST], [0.424, 0.3, PURPLE], [0.48, 0.26, YELLOW], [0.56, 0.63, CYAN], [0.575, 0.38, YELLOW], [0.627, 0.4, ORANGE], [0.667, 0.46, ORANGE], [0.721, 0.56, GOLD], [0.982, 0.39, GREEN]],
    }),
  },
  {
    title: "CPU使用率统计", size: S, cols: [384, 311, 205], bodyClass: "h-[188px]", bar: "top-[29px] h-[70px]",
    heads: ["应用分组", "服务器IP", "CPU使用率▾"],
    rows: [node("35", "42.28%", G1), node("32", "38.15%", G1), node("33", "35.80%", G1), node("19", "34.51%", G1), node("18", "34.21%", G1)],
  },
  {
    title: "CPU使用率统计(系统)", size: S, cols: [384, 311, 205], bodyClass: "h-[188px]", bar: "top-[29px] h-[70px]",
    heads: ["应用分组", "服务器IP", "CPU使用率▾"],
    rows: [node("32", "4.79%", G1), node("18", "3.99%", G1), node("22", "3.81%", G1), node("17", "3.58%", G1), node("19", "3.54%", G1)],
  },
  {
    title: "CPU软中断统计(系统)", size: M, cols: [384, 311, 205], bodyClass: "h-[226px]", bar: "top-[29px] h-[108px]",
    heads: ["应用分组", "服务器IP", "CPU软中断▾"],
    rows: [node("17", "0.20%", G1), node("22", "0.19%", G1), node("13", "0.19%", G1), node("21", "0.19%", G1), node("18", "0.19%", G1), node("16", "0.19%", G1)],
  },
  {
    title: "磁盘使用率（/）", size: L, cols: [389, 311, 200], small: true, cut: true, bodyClass: "h-[296px]", bar: "top-[47px] h-[248px]",
    heads: ["应用分组", "服务器IP", "磁盘使用率▾"],
    rows: [["14", "30.99%"], ["15", "21.66%"], ["36", "17.93%"], ["32", "17.54%"], ["33", "17.44%"], ["35", "17.23%"], ["34", "17.08%"], ["17", "17.01%"], ["21", "16.30%"]].map(([a, b]) => node(a, b, G2)),
  },
  {
    title: "磁盘使用率（/service）", size: L, cols: [389, 311, 200], small: true, bodyClass: "h-[296px]", bar: "top-[23px] h-[248px]",
    heads: ["应用分组", "服务器IP", "磁盘使用率▾"],
    rows: [["33", "28.19%"], ["13", "3.90%"], ["14", "3.83%"], ["19", "3.47%"], ["20", "3.47%"], ["18", "3.47%"], ["21", "3.47%"], ["22", "3.47%"], ["17", "3.45%"], ["15", "3.45%"]].map(([a, b]) => node(a, b, G2)),
  },
  {
    title: "内存使用率排行榜", size: M, cols: [394, 315, 191], small: true, bodyClass: "h-[220px]", bar: "top-[23px] h-[129px]",
    heads: ["应用分组", "服务器IP", "可用内存▾"],
    rows: [["35", "208.95 GB"], ["21", "202.55 GB"], ["33", "200.65 GB"], ["19", "197.96 GB"], ["13", "195.06 GB"], ["20", "192.84 GB"], ["18", "191.07 GB"]].map(([a, b]) => node(a, b)),
  },
  {
    title: "内存使用排行榜(swap)", size: M, cols: [402, 321, 177], small: true, bodyClass: "h-[220px]", bar: "top-[23px] h-[129px]",
    heads: ["应用分组", "服务器IP", "内存使用▾"],
    rows: ["22", "21", "20", "19", "18", "17", "16"].map((a) => node(a, "-")),
  },
];

/* ---------- icons ---------- */
function Apps({ className }: { className: string }) {
  return (
    <svg viewBox="0 0 20 20" className={className} fill="currentColor">
      <rect x="0" y="0" width="9.4" height="9.4" rx="1.6" />
      <rect x="10.6" y="0" width="9.4" height="9.4" rx="1.6" />
      <rect x="0" y="10.6" width="9.4" height="9.4" rx="1.6" />
      <rect x="10.6" y="10.6" width="9.4" height="9.4" rx="1.6" />
    </svg>
  );
}

function Wheel() {
  const spokes = Array.from({ length: 7 }, (_, i) => (i * 360) / 7);
  return (
    <svg viewBox="0 0 32 32" className="size-7">
      <path d="M16 1.5 27.3 7 30.2 19.2 22.3 29.2H9.7L1.8 19.2 4.7 7Z" fill="#2f80e4" stroke="#2f80e4" strokeWidth="2" strokeLinejoin="round" />
      <g stroke="#fff" fill="none" strokeWidth="1.5">
        <circle cx="16" cy="16" r="6.4" />
        {spokes.map((a) => (
          <line key={a} x1="16" y1="14.2" x2="16" y2="5.4" transform={`rotate(${a} 16 16)`} />
        ))}
      </g>
      <circle cx="16" cy="16" r="1.9" fill="#fff" />
    </svg>
  );
}

function AddPanel() {
  return (
    <svg viewBox="0 0 24 20" className="h-5 w-6">
      <g fill="#f0ead2">
        <rect x="0" y="7" width="3.4" height="10" /><rect x="4.6" y="4" width="3.4" height="13" />
        <rect x="9.2" y="10" width="3.4" height="7" /><rect x="13.2" y="2" width="3.2" height="15" />
      </g>
      <path d="M18.2 5h3v3.6H24v3h-2.8V15h-3v-3.4h-3v-3h3Z" fill="#e58b28" />
    </svg>
  );
}

function Monitor() {
  return (
    <svg viewBox="0 0 20 18" className="h-[17px] w-5" fill="none" stroke="#8e8e8e" strokeWidth="2">
      <rect x="1" y="1" width="18" height="12.5" rx="1.5" />
      <path d="M5 17h10" /><path d="M10 14v3" strokeWidth="4" />
    </svg>
  );
}

function NavButton({ children, label, className = "" }: { children: React.ReactNode; label: string; className?: string }) {
  return (
    <button aria-label={label} className={"flex h-8 items-center justify-center rounded-xs border border-[#2c2c2f] bg-linear-to-b from-[#242426] to-[#2b2b2e] text-sm text-[#8e8e8e] " + className}>
      {children}
    </button>
  );
}

function Variable({ label, value }: { label: string; value: string }) {
  return (
    <div className="flex h-[35px] min-w-0 rounded-xs">
      <span className="flex items-center rounded-l-xs border border-[#232325] bg-[#212124] px-2 text-xs font-medium text-[#33b5e5]">{label}</span>
      <button aria-label={label} className="flex min-w-0 items-center gap-1 rounded-r-xs border border-l-0 border-[#262628] bg-[#0b0c0e] pr-1.5 pl-2 text-sm whitespace-nowrap text-[#d8d9da]">
        {value}
        <Caret />
      </button>
    </div>
  );
}

const ips = [13, 14, 15, 16, 17, 18, 19, 20, 21, 22, 32, 33, 34, 35, 36].map((n) => "10.41.22." + n).join(" + ");

function Events() {
  const cols = [309, 623, 100, 395, 100, 284];
  const th = "pl-[17px] font-medium text-[#33b5e5]";
  const td = "border-b border-[#38383b] pl-[17px] whitespace-nowrap";
  return (
    <section className={panelClass + " h-[372px]"}>
      <span className="absolute top-0 left-0 size-[27px] bg-[#303236] [clip-path:polygon(0_0,100%_0,0_100%)]" />
      <FaExternalLinkAlt className="absolute top-[3px] left-1 size-[10px] text-[#8e8e8e]" />
      <Title>zabbix当前事件</Title>
      <div className="mt-2 flex-1 px-2">
        <table className="w-full table-fixed border-separate border-spacing-0 text-left text-[15px] text-[#d8d9da]">
          <colgroup>
            {cols.map((c, i) => (
              <col key={i} style={{ width: `${(c / 1811) * 100}%` }} />
            ))}
          </colgroup>
          <thead>
            <tr className="h-[37px] bg-linear-to-r from-[#2f2f32] to-[#262628] *:border-y-2 *:border-[#161719]">
              {["Host (Technical Name)", "Host Groups", "Status", "Problem", "Age", "Time"].map((h) => (
                <th key={h} className={th}>{h}</th>
              ))}
            </tr>
          </thead>
          <tbody>
            <tr className="h-[38px]">
              <td className={td}>10.41.22.38</td>
              <td className={td}>bi_prod_cdh-node</td>
              <td className={td + " font-light text-[#e02f2f]"}>PROBLEM</td>
              <td className={td}>服务器内存使用率大于80%,请检查业务</td>
              <td className={td}>6 分钟</td>
              <td className={td}>
                <span className="flex items-center justify-between pr-[95px]">
                  16 8月 2021 11:2...
                  <FaInfoCircle className="size-4 text-[#75757a]" />
                </span>
              </td>
            </tr>
          </tbody>
        </table>
      </div>
      <div className="mb-1.5 flex h-[42px] items-center justify-center border-t border-b border-[#1b1b1d] text-sm text-[#d8d9da] shadow-[0_-2px_6px_#1b1b1d]">
        <button disabled className="h-[30px] w-[110px] rounded-xs bg-linear-to-r from-[#28282a] to-[#212124] text-[#235f8b]">Previous</button>
        <label className="ml-5 flex items-center gap-2">
          Page
          <input defaultValue="1" className="h-[30px] w-[70px] rounded-xs bg-[#0b0c0e] text-center" />
        </label>
        <span className="ml-2.5">of 1</span>
        <select aria-label="rows per page" className="ml-[38px] h-[30px] w-[112px] rounded-xs bg-[#0b0c0e] pl-2">
          <option>50 rows</option>
        </select>
        <button disabled className="ml-[19px] h-[30px] w-[112px] rounded-xs bg-linear-to-r from-[#28282a] to-[#212124] text-[#235f8b]">Next</button>
      </div>
    </section>
  );
}

function Column({ items }: { items: (Chart | Grid)[] }) {
  return (
    <div className="flex min-w-0 flex-col gap-2">
      {items.map((p) => ("cols" in p ? <TablePanel key={p.title} g={p} /> : <ChartPanel key={p.title} c={p} />))}
    </div>
  );
}

export default function App() {
  return (
    <div className="relative flex min-h-screen overflow-hidden bg-[#161719] font-[Roboto,'Noto_Sans_CJK_SC',sans-serif] text-[#d8d9da]">
      <aside className="flex w-[60px] shrink-0 flex-col items-center bg-black text-[#9a9a9a] shadow-[0_0_14px_#000]">
        <svg width="0" height="0" className="absolute">
          <linearGradient id="flame" x1="0" y1="0" x2="0" y2="1">
            <stop offset="0.15" stopColor="#f05a28" /><stop offset="0.9" stopColor="#e5b700" />
          </linearGradient>
        </svg>
        <a href="#home" aria-label="Home" className="mt-[11px]"><SiGrafana className="size-8" fill="url(#flame)" /></a>
        <a href="#create" aria-label="Create" className="mt-16">
          <svg viewBox="0 0 18 18" className="size-[18px]" fill="currentColor"><path d="M6.500 1.5Q6.500.5 7.500.5h3q1 0 1 1v5h5q1 0 1 1v3q0 1-1 1h-5v5q0 1-1 1h-3q-1 0-1-1v-5h-5q-1 0-1-1v-3q0-1 1-1h5Z" /></svg>
        </a>
        <a href="#dashboards" aria-label="Dashboards" className="mt-[26px]"><Apps className="size-[22px]" /></a>
        <a href="#kubernetes" aria-label="Kubernetes" className="mt-[19px]"><Wheel /></a>
        <a href="#configuration" aria-label="Configuration" className="mt-[19px]"><FaCog className="size-[22px]" /></a>
        <span className="mt-auto size-7 overflow-hidden rounded-full bg-[#c4c4c4]">
          <svg viewBox="0 0 28 28" fill="#fff"><ellipse cx="14" cy="12" rx="6.500" ry="7.500" /><path d="M4 28q1-8 7-9h6q6 1 7 9Z" /></svg>
        </span>
        <a href="#help" aria-label="Help" className="mt-[19px] mb-[23px] flex size-[22px] items-center justify-center rounded-full border-2 border-current text-sm font-medium text-[#a0a0a0]">?</a>
      </aside>

      <main className="-mr-0.5 min-w-0 flex-1 bg-[linear-gradient(180deg,#212124_0,#161719_110px)] pl-4">
        <header className="flex h-[54px] items-center text-lg">
          <Apps className="size-[19px] text-[#adadb0]" />
          <a href="#folder" className="ml-2.5 text-[#8e8e8e]">大数据服务器监控</a>
          <svg viewBox="0 0 8 12" className="mx-2 h-3 w-2" fill="none" stroke="#8e8e8e" strokeWidth="2"><path d="m1.500 1 4.500 5-4.500 5" /></svg>
          <button className="flex items-center gap-2 text-[#e3e3e3]">大数据服务器监控<Caret className="mt-1" /></button>
          <div className="ml-auto flex gap-1">
            <NavButton label="Add panel" className="w-[46px]"><AddPanel /></NavButton>
            <NavButton label="Star" className="w-[33px]"><FaRegStar className="size-4" /></NavButton>
            <NavButton label="Share" className="w-[33px]"><FaRegShareSquare className="size-4" /></NavButton>
            <NavButton label="Save" className="w-8"><FaRegSave className="size-4" /></NavButton>
            <NavButton label="Settings" className="w-9"><FaCog className="size-[18px] text-[#77777c]" /></NavButton>
            <NavButton label="Cycle view" className="mx-2.5 w-[35px]"><Monitor /></NavButton>
            <NavButton label="Time range" className="w-[134px] gap-1"><FaRegClock className="size-3" />Last 24 hours<Caret className="ml-1" /></NavButton>
            <NavButton label="Zoom out" className="w-[33px]"><FaSearchMinus className="size-4" /></NavButton>
            <div className="flex">
              <NavButton label="Refresh" className="w-8"><FaSync className="size-3.5" /></NavButton>
              <NavButton label="Refresh interval" className="w-[55px] gap-1.5 border-l-0 font-medium"><span className="text-[#ee7f2b]">15m</span><Caret /></NavButton>
            </div>
          </div>
        </header>

        <div className="mt-[17px] flex gap-4">
          <Variable label="group" value="bi_prod_cdh-node" />
          <Variable label="hostname" value="All" />
          <Variable label="IP" value={ips} />
        </div>

        <div className="mt-2.5 flex flex-col gap-2">
          <Events />
          <div className="grid grid-cols-[minmax(0,1fr)_minmax(0,1fr)] items-start gap-2">
            <Column items={left} />
            <Column items={right} />
          </div>
        </div>
      </main>

      <div className="absolute right-0 bottom-0 flex h-[21px] w-[161px] items-center justify-between bg-white pr-1.5 pl-2 text-[#2272c3]">
        <span className="absolute bottom-0 -left-7 flex h-[25px] w-7 -rotate-6 items-center justify-center rounded-xs bg-[#ee5526] text-[26px] leading-none font-black text-white">S</span>
        <b className="text-sm">中</b>
        <b className="text-sm">°,</b>
        <FaRegSmile className="size-4" />
        <FaMicrophone className="size-4" />
        <FaKeyboard className="size-4" />
        <svg viewBox="0 0 18 16" className="h-4 w-[18px]" fill="#b9bfcb"><circle cx="6" cy="3" r="2.500" /><path d="M1 15q0-9 5-9t5 4v5Z" /><rect x="8" y="8" width="9" height="7" rx="1" /></svg>
        <FaTshirt className="size-4" />
      </div>
    </div>
  );
}
